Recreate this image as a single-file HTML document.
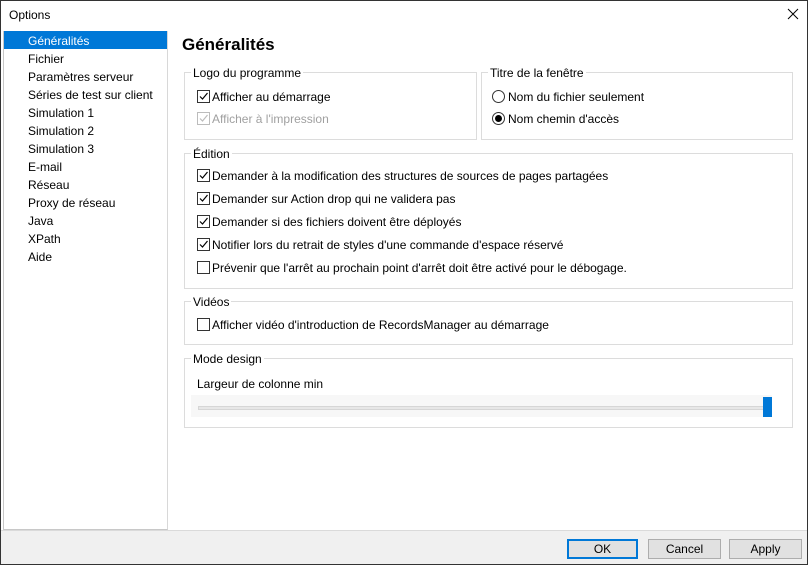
<!DOCTYPE html>
<html><head><meta charset="utf-8"><style>
*{margin:0;padding:0;box-sizing:border-box}
body{width:808px;height:565px;overflow:hidden;background:#fff;font-family:"Liberation Sans",sans-serif;font-size:12px;color:#000;position:relative}
.a{position:absolute;white-space:nowrap}
.t{margin-top:1px}
.win{position:absolute;left:0;top:0;width:808px;height:565px;border:1px solid #333}
.side{position:absolute;left:3px;top:31px;width:165px;height:499px;border:1px solid #c8c8c8;border-right:1px solid #d8d8d8;border-top:none}
.side div{height:18px;line-height:20px;padding-left:24px}
.side .sel{background:#0078d7;color:#fff}
.grp{position:absolute;border:1px solid #dcdcdc}
.lg{position:absolute;top:-7px;left:6px;background:#fff;padding:0 2px;line-height:14px}
.cb{position:absolute;width:13px;height:13px;border:1px solid #333;background:#fff}
.cb svg{position:absolute;left:0;top:0}
.rb{position:absolute;width:13px;height:13px;border:1px solid #333;border-radius:50%;background:#fff}
.foot{position:absolute;left:1px;top:530px;width:806px;height:34px;background:#f0f0f0;border-top:1px solid #dadada}
.btn{position:absolute;top:539px;height:20px;border:1px solid #adadad;background:#e1e1e1;text-align:center;line-height:19px}
</style></head><body>
<div class="win"></div>
<div class="a" style="left:9px;top:8px">Options</div>
<svg class="a" style="left:787px;top:8px" width="12" height="12"><path d="M1 1L11 11M11 1L1 11" stroke="#000" stroke-width="1"/></svg>
<div class="side">
<div class="sel">Généralités</div><div>Fichier</div><div>Paramètres serveur</div><div>Séries de test sur client</div><div>Simulation 1</div><div>Simulation 2</div><div>Simulation 3</div><div>E-mail</div><div>Réseau</div><div>Proxy de réseau</div><div>Java</div><div>XPath</div><div>Aide</div>
</div>
<div class="a" style="left:182px;top:35px;font-size:17px;font-weight:bold">Généralités</div>

<div class="grp" style="left:184px;top:72px;width:293px;height:68px"><div class="lg">Logo du programme</div></div>
<div class="grp" style="left:481px;top:72px;width:312px;height:68px"><div class="lg">Titre de la fenêtre</div></div>
<div class="grp" style="left:184px;top:153px;width:609px;height:136px"><div class="lg">Édition</div></div>
<div class="grp" style="left:184px;top:301px;width:609px;height:44px"><div class="lg">Vidéos</div></div>
<div class="grp" style="left:184px;top:358px;width:609px;height:70px"><div class="lg">Mode design</div></div>

<div class="cb" style="left:197px;top:90px"><svg width="11" height="11"><path d="M2 5.5L4.5 8L9.5 2" fill="none" stroke="#000" stroke-width="1.2"/></svg></div>
<div class="a" style="left:212px;top:90px">Afficher au démarrage</div>
<div class="cb" style="left:197px;top:112px;border-color:#bcbcbc"><svg width="11" height="11"><path d="M2 5.5L4.5 8L9.5 2" fill="none" stroke="#bcbcbc" stroke-width="1.2"/></svg></div>
<div class="a" style="left:212px;top:112px;color:#a0a0a0">Afficher à l'impression</div>

<div class="rb" style="left:492px;top:90px"></div>
<div class="a" style="left:508px;top:90px">Nom du fichier seulement</div>
<div class="rb" style="left:492px;top:112px"><div style="position:absolute;left:2px;top:2px;width:7px;height:7px;border-radius:50%;background:#000"></div></div>
<div class="a" style="left:508px;top:112px">Nom chemin d'accès</div>

<div class="cb" style="left:197px;top:169px"><svg width="11" height="11"><path d="M2 5.5L4.5 8L9.5 2" fill="none" stroke="#000" stroke-width="1.2"/></svg></div>
<div class="a" style="left:212px;top:169px">Demander à la modification des structures de sources de pages partagées</div>
<div class="cb" style="left:197px;top:192px"><svg width="11" height="11"><path d="M2 5.5L4.5 8L9.5 2" fill="none" stroke="#000" stroke-width="1.2"/></svg></div>
<div class="a" style="left:212px;top:192px">Demander sur Action drop qui ne validera pas</div>
<div class="cb" style="left:197px;top:215px"><svg width="11" height="11"><path d="M2 5.5L4.5 8L9.5 2" fill="none" stroke="#000" stroke-width="1.2"/></svg></div>
<div class="a" style="left:212px;top:215px">Demander si des fichiers doivent être déployés</div>
<div class="cb" style="left:197px;top:238px"><svg width="11" height="11"><path d="M2 5.5L4.5 8L9.5 2" fill="none" stroke="#000" stroke-width="1.2"/></svg></div>
<div class="a" style="left:212px;top:238px">Notifier lors du retrait de styles d'une commande d'espace réservé</div>
<div class="cb" style="left:197px;top:261px"></div>
<div class="a" style="left:212px;top:261px">Prévenir que l'arrêt au prochain point d'arrêt doit être activé pour le débogage.</div>

<div class="cb" style="left:197px;top:318px"></div>
<div class="a" style="left:212px;top:318px">Afficher vidéo d'introduction de RecordsManager au démarrage</div>

<div class="a" style="left:197px;top:377px">Largeur de colonne min</div>
<div class="a" style="left:191px;top:395px;width:581px;height:22px;background:#f7f7f7"></div>
<div class="a" style="left:198px;top:406px;width:567px;height:4px;background:#e7e7e7;border:1px solid #d6d6d6"></div>
<div class="a" style="left:763px;top:397px;width:9px;height:20px;background:#0078d7"></div>

<div class="foot"></div>
<div class="btn" style="left:567px;width:71px;border:2px solid #0078d7;line-height:17px">OK</div>
<div class="btn" style="left:648px;width:73px">Cancel</div>
<div class="btn" style="left:729px;width:73px">Apply</div>
</body></html>
